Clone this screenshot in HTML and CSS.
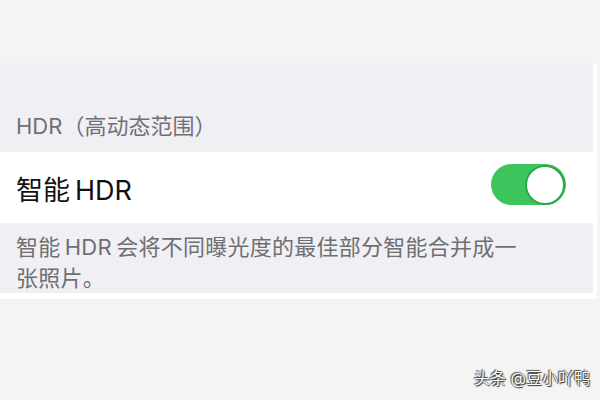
FILE: index.html
```html
<!DOCTYPE html>
<html lang="zh-CN">
<head>
  <meta charset="UTF-8">
  <title>HDR</title>
  <link rel="stylesheet" href="styles.css">
</head>
<body>
  <div class="screen">
    <div class="top"></div>
    <div class="panel">
      <div class="group-title">HDR（高动态范围）</div>
      <div class="cell">
        <span class="cell-label">智能&thinsp;HDR</span>
        <span class="switch on"><span class="knob"></span></span>
      </div>
      <p class="footnote">智能&thinsp;HDR&thinsp;会将不同曝光度的最佳部分智能合并成一张照片。</p>
    </div>
    <div class="watermark">头条 @豆小吖鸭</div>
  </div>
</body>
</html>
```

FILE: styles.css
```css
body {
  margin: 0;
  background: #f4f4f4;
  font-family: Inter, "Noto Sans CJK SC", sans-serif;
}
.screen {
  position: relative;
  width: 600px;
  height: 400px;
  overflow: hidden;
}
.top {
  height: 63px;
  background: #f4f4f4;
}
.panel {
  width: 593px;
  border-right: 4px solid #fff;
  border-bottom: 6px solid #fff;
  background: #f0f0f4;
}
.group-title {
  height: 89px;
  box-sizing: border-box;
  display: flex;
  align-items: flex-end;
  padding: 0 16px 11px;
  font-size: 22px;
  line-height: 30px;
  color: #707074;
}
.cell {
  height: 71px;
  background: #fff;
  display: flex;
  align-items: center;
  justify-content: space-between;
  padding: 0 31px 0 16px;
  margin-right: -4px;
}
.cell-label {
  font-size: 27px;
  color: #111;
  padding-top: 2px;
}
.switch {
  width: 75px;
  height: 41px;
  border-radius: 21px;
  background: #3cc55c;
  display: flex;
  align-items: center;
  justify-content: flex-end;
  padding: 0 1px;
  box-sizing: border-box;
  margin-top: -6px;
}
.knob {
  width: 40px;
  height: 40px;
  border-radius: 50%;
  background: #fff;
  border: 2px solid #2fa64d;
  box-sizing: border-box;
}
.footnote {
  margin: 0;
  height: 70px;
  box-sizing: border-box;
  padding: 9px 16px 0;
  width: 545px;
  font-size: 22px;
  line-height: 31px;
  letter-spacing: 0.25px;
  color: #6e6e73;
}
.watermark {
  position: absolute;
  right: 10px;
  bottom: 11px;
  font-size: 16px;
  color: #fff;
  text-shadow: 0 0 1px #222, 1px 1px 1px #333, -1px -1px 1px #555;
}
```
